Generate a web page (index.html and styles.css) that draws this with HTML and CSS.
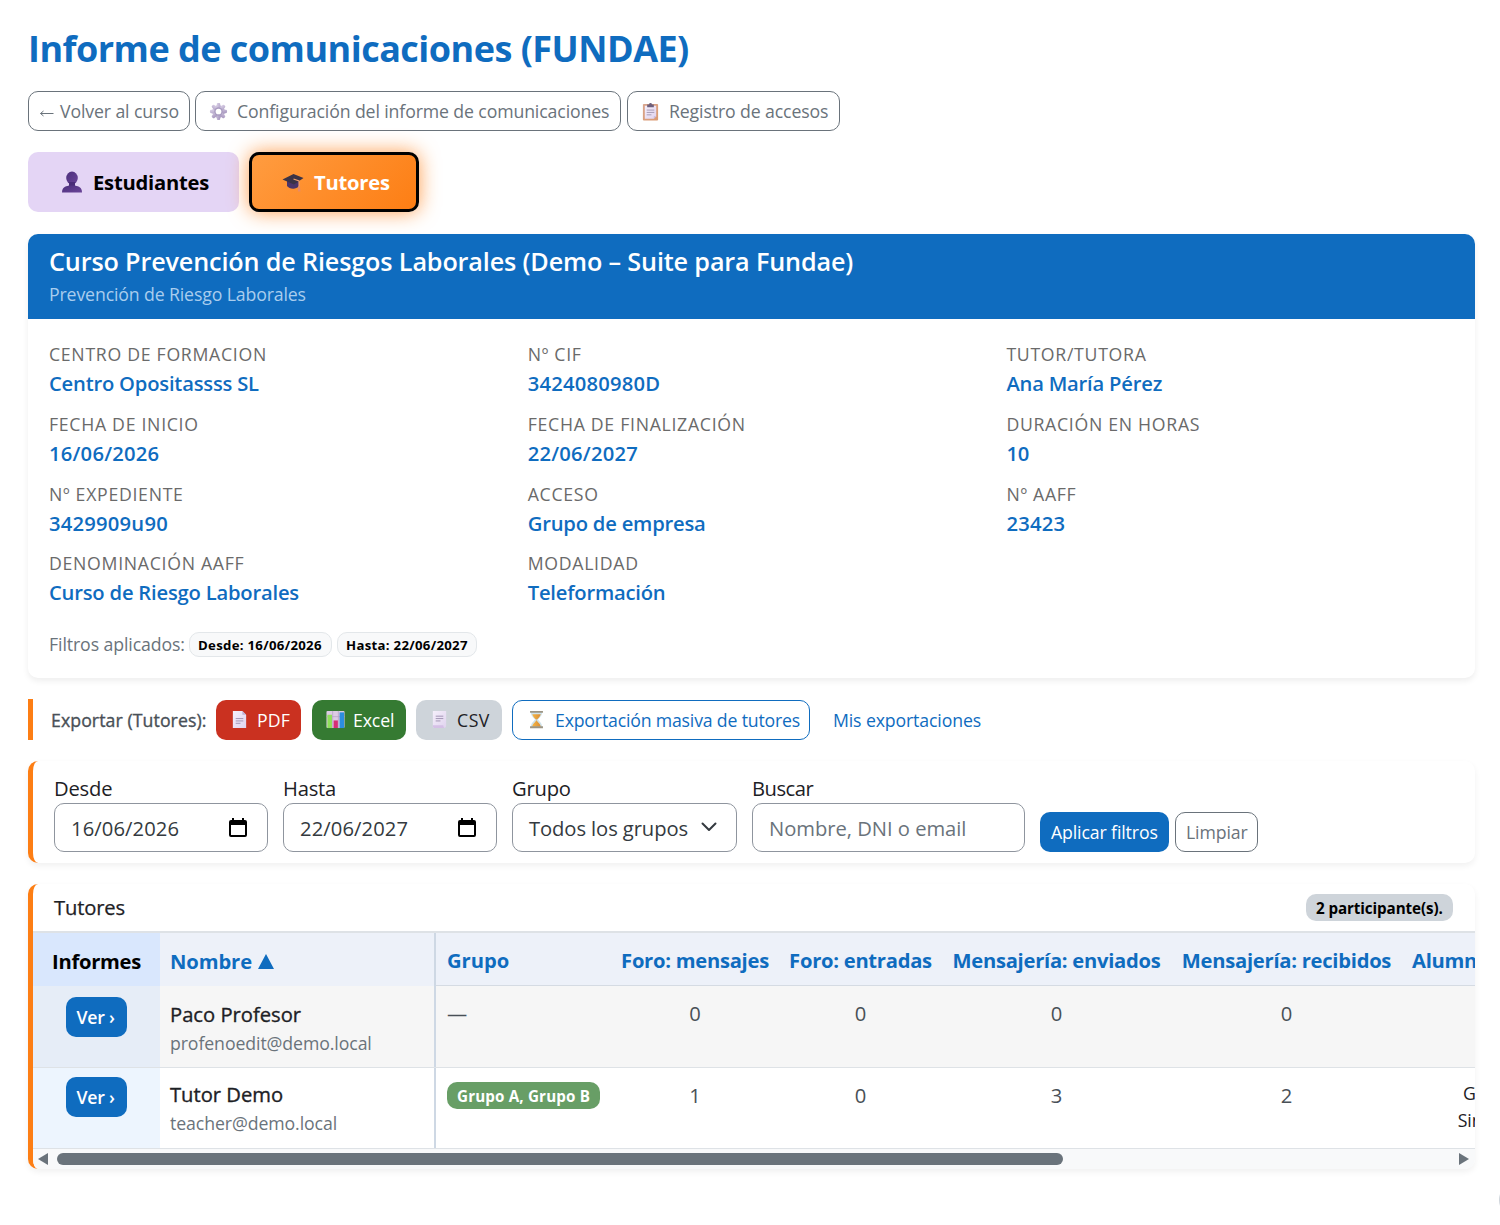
FILE: index.html
```html
<!DOCTYPE html>
<html lang="es">
<head>
<meta charset="utf-8">
<title>Informe de comunicaciones (FUNDAE)</title>
<link rel="stylesheet" href="styles.css">
</head>
<body>
<svg class="sprite" width="0" height="0" aria-hidden="true">
  <defs>
    <linearGradient id="lilac" x1="0" y1="0" x2="1" y2="1"><stop offset="0" stop-color="#d9cfe6"/><stop offset="1" stop-color="#a595bd"/></linearGradient>
    <linearGradient id="violet" x1="0" y1="0" x2="1" y2="1"><stop offset="0" stop-color="#4b2f7c"/><stop offset="1" stop-color="#6b4599"/></linearGradient>
    <linearGradient id="paper" x1="0" y1="0" x2="1" y2="1"><stop offset="0" stop-color="#f5effb"/><stop offset="1" stop-color="#e0d3ee"/></linearGradient>
    <linearGradient id="board" x1="0" y1="0" x2="1" y2="1"><stop offset="0" stop-color="#d8a58e"/><stop offset="1" stop-color="#dc9a70"/></linearGradient>
    <linearGradient id="sand" x1="0" y1="0" x2="1" y2="0"><stop offset="0" stop-color="#f4b545"/><stop offset="1" stop-color="#d98c35"/></linearGradient>
  </defs>
</svg>
<main class="page">
  <h1 class="page-title">Informe de comunicaciones (FUNDAE)</h1>

  <nav class="toolbar">
    <a class="btn btn-outline btn-back"><svg class="arrow" viewBox="0 0 15 12"><path d="M1.500 6.500H14.500M4.500 4L1.500 6.500L4.500 9" fill="none" stroke="currentColor" stroke-width="1"/></svg>Volver al curso</a>
    <a class="btn btn-outline btn-config">
      <svg class="emoji" viewBox="0 0 20 20"><g fill="url(#lilac)"><circle cx="10" cy="10" r="6.8"/><g id="teeth"><rect x="8.2" y="1" width="3.6" height="18" rx="1.2"/><rect x="1" y="8.2" width="18" height="3.6" rx="1.2"/></g><use href="#teeth" transform="rotate(45 10 10)"/></g><circle cx="10" cy="10" r="4.4" fill="#a99bc0"/><circle cx="10" cy="10" r="3" fill="#fff"/></svg>
      Configuración del informe de comunicaciones</a>
    <a class="btn btn-outline btn-log">
      <svg class="emoji" viewBox="0 0 20 20"><rect x="2" y="2" width="16" height="17.5" rx="1" fill="url(#board)"/><path d="M4 4H16V15L13.5 17.5H4Z" fill="url(#paper)"/><path d="M16 15h-2.5v2.5z" fill="#c9b6d8"/><path d="M6 8.5h8M6 11h8M6 13.5h5" stroke="#a69ab5" stroke-width="1"/><path d="M6.5 2.5h2a1.5 1.5 0 0 1 3 0h2V5.5h-7z" fill="#6d5f7c"/></svg>
      Registro de accesos</a>
  </nav>

  <div class="tabs">
    <a class="tab tab-students"><svg class="tab-icon" viewBox="0 0 22 22"><ellipse cx="11" cy="7" rx="5.8" ry="6.500" fill="url(#violet)"/><path d="M8 11h6v5H8z" fill="#4a2d78"/><path d="M1 21.500c0-5 3-6 7-7h6c4 1 7 2 7 7z" fill="url(#violet)"/></svg>Estudiantes</a>
    <a class="tab tab-tutors"><svg class="tab-icon" viewBox="0 0 22 22"><path d="M5 9v6c2 3 9 4 12 0V9z" fill="#4c3569"/><path d="M0.500 8.500L11.500 3L21.500 7L12 13.500z" fill="#3b3346"/><path d="M11.500 8l5.500 2v7" fill="none" stroke="#f0a070" stroke-width="1.100"/><path d="M16.200 15.500h1.800l.4 5h-2.500z" fill="#e98a66"/></svg>Tutores</a>
  </div>

  <section class="course">
    <header class="course-head">
      <h2 class="course-title">Curso Prevención de Riesgos Laborales (Demo – Suite para Fundae)</h2>
      <p class="course-sub">Prevención de Riesgo Laborales</p>
    </header>
    <div class="course-body">
      <dl class="facts">
        <div class="fact"><dt>CENTRO DE FORMACION</dt><dd>Centro Opositassss SL</dd></div>
        <div class="fact"><dt>Nº CIF</dt><dd class="numeric">3424080980D</dd></div>
        <div class="fact"><dt>TUTOR/TUTORA</dt><dd>Ana María Pérez</dd></div>
        <div class="fact"><dt>FECHA DE INICIO</dt><dd class="numeric">16/06/2026</dd></div>
        <div class="fact"><dt>FECHA DE FINALIZACIÓN</dt><dd class="numeric">22/06/2027</dd></div>
        <div class="fact"><dt>DURACIÓN EN HORAS</dt><dd>10</dd></div>
        <div class="fact"><dt>Nº EXPEDIENTE</dt><dd class="numeric">3429909u90</dd></div>
        <div class="fact"><dt>ACCESO</dt><dd>Grupo de empresa</dd></div>
        <div class="fact"><dt>Nº AAFF</dt><dd class="numeric">23423</dd></div>
        <div class="fact"><dt>DENOMINACIÓN AAFF</dt><dd>Curso de Riesgo Laborales</dd></div>
        <div class="fact"><dt>MODALIDAD</dt><dd>Teleformación</dd></div>
      </dl>
      <div class="applied"><span class="applied-label">Filtros aplicados:</span><span class="chip chip-from">Desde: 16/06/2026</span><span class="chip chip-to">Hasta: 22/06/2027</span></div>
    </div>
  </section>

  <section class="export">
    <span class="export-label">Exportar (Tutores):</span>
    <a class="btn btn-pdf"><svg class="emoji" viewBox="0 0 20 20"><path d="M3 1h10l4 4v14H3z" fill="url(#paper)"/><path d="M13 1v4h4z" fill="#bfaed2"/><path d="M6 9h8M6 11.500h8M6 14h5" stroke="#a092b2" stroke-width="1"/></svg>PDF</a>
    <a class="btn btn-excel"><svg class="emoji" viewBox="0 0 20 20"><rect x=".5" y="1" width="19" height="18" rx="1" fill="#dccbe4"/><path d="M7 1v18M13 1v18M.5 7h19" stroke="#b6a2c5" stroke-width=".8"/><rect x="1.500" y="5" width="4.800" height="14" fill="#8fe05a"/><rect x="8" y="11" width="4.500" height="8" fill="#d62f75"/><rect x="14.300" y="2.500" width="4.700" height="16.500" fill="#2c8ee0"/></svg>Excel</a>
    <a class="btn btn-csv"><svg class="emoji" viewBox="0 0 20 20"><path d="M3 1h14v15c0 2-1 3-3 3H5c-1.500 0-2-1-2-2z" fill="url(#paper)"/><path d="M3 16h11c0 2 1 3 3 3H5c-1.500 0-2-1-2-3z" fill="#d5c0e6"/><path d="M6 6.500h8M6 9h8M6 11.500h5" stroke="#a092b2" stroke-width="1"/></svg>CSV</a>
    <a class="btn btn-bulk"><svg class="emoji" viewBox="0 0 20 20"><path d="M4 2h12c0 4-2.500 5.500-4.500 8c2 2.500 4.500 4 4.500 8H4c0-4 2.500-5.500 4.500-8C6.500 7.500 4 6 4 2z" fill="#cfe3ec"/><path d="M5.500 4.500h9c-.6 2.500-2.500 4-4 5.500h-1c-1.500-1.500-3.400-3-4-5.500zM9.500 11h1c.5 2 3.500 3 4 6.500h-9c.5-3.500 3.500-4.500 4-6.500z" fill="url(#sand)"/><path d="M3.200 1h13.600v2H3.200zM3.200 17.200h13.600v2H3.200z" fill="#9c9584"/></svg>Exportación masiva de tutores</a>
    <a class="export-link">Mis exportaciones</a>
  </section>

  <form class="panel filters">
    <label class="field f-date"><span class="field-label">Desde</span><span class="control numeric">16/06/2026<svg class="cal" viewBox="0 0 18 20"><path d="M3 0h2v2h8V0h2v2h1q2 0 2 2v13q0 2-2 2H2q-2 0-2-2V4q0-2 2-2h1zM2 7v10h14V7z" fill="#000" fill-rule="evenodd"/></svg></span></label>
    <label class="field f-date"><span class="field-label">Hasta</span><span class="control numeric">22/06/2027<svg class="cal" viewBox="0 0 18 20"><path d="M3 0h2v2h8V0h2v2h1q2 0 2 2v13q0 2-2 2H2q-2 0-2-2V4q0-2 2-2h1zM2 7v10h14V7z" fill="#000" fill-rule="evenodd"/></svg></span></label>
    <label class="field f-group"><span class="field-label">Grupo</span><span class="control">Todos los grupos<svg class="chev" viewBox="0 0 16 10"><path d="M1.500 1.500L8 8l6.500-6.500" fill="none" stroke="#343a40" stroke-width="2" stroke-linecap="round" stroke-linejoin="round"/></svg></span></label>
    <label class="field f-search"><span class="field-label search-label">Buscar</span><span class="control placeholder">Nombre, DNI o email</span></label>
    <a class="btn btn-primary btn-apply">Aplicar filtros</a>
    <a class="btn btn-outline btn-clear">Limpiar</a>
  </form>

  <section class="panel results">
    <header class="results-head"><h3 class="results-title">Tutores</h3><span class="count">2 participante(s).</span></header>
    <div class="table">
      <div class="tr thead">
        <div class="td c-report">Informes</div>
        <div class="td c-name">Nombre<svg class="sort" viewBox="0 0 16 15"><path d="M8 0l8 15H0z" fill="#0f6cbf"/></svg></div>
        <div class="td c-group">Grupo</div>
        <div class="td c-fm">Foro: mensajes</div>
        <div class="td c-fe">Foro: entradas</div>
        <div class="td c-ms">Mensajería: enviados</div>
        <div class="td c-mr">Mensajería: recibidos</div>
        <div class="td c-last">Alumnos</div>
      </div>
      <div class="tr odd">
        <div class="td c-report"><a class="btn btn-primary btn-view">Ver ›</a></div>
        <div class="td c-name"><span class="name">Paco Profesor</span><span class="mail">profenoedit@demo.local</span></div>
        <div class="td c-group">—</div>
        <div class="td c-fm">0</div><div class="td c-fe">0</div><div class="td c-ms">0</div><div class="td c-mr">0</div><div class="td c-last"></div>
      </div>
      <div class="tr even">
        <div class="td c-report"><a class="btn btn-primary btn-view">Ver ›</a></div>
        <div class="td c-name"><span class="name">Tutor Demo</span><span class="mail">teacher@demo.local</span></div>
        <div class="td c-group"><span class="group-badge">Grupo A, Grupo B</span></div>
        <div class="td c-fm">1</div><div class="td c-fe">0</div><div class="td c-ms">3</div><div class="td c-mr">2</div>
        <div class="td c-last"><span class="detail">Grupo A</span><span class="detail">Sin grupo</span></div>
      </div>
    </div>
    <div class="scrollbar"><span class="scroll-arrow left"></span><span class="thumb"></span><span class="scroll-arrow right"></span></div>
  </section>
</main>
<div class="fab"></div>
</body>
</html>
```
FILE: styles.css
```css
* { box-sizing: border-box; }
body { margin: 0; width: 1500px; height: 1225px; overflow: hidden; position: relative; background: #fff; color: #1d2125; font: 400 20.2px/30px "Open Sans", "Noto Sans", sans-serif; }
h1, h2, h3, p, dl, dd { margin: 0; font-weight: inherit; font-size: inherit; }
.sprite { position: absolute; }
.page { padding: 0 25px 0 28px; display: flex; flex-direction: column; white-space: nowrap; }

.page-title { margin-top: 24px; height: 50px; line-height: 50px; font-size: 36px; font-weight: 700; letter-spacing: -.52px; color: #0f6cbf; }

.btn { display: flex; align-items: center; height: 40px; padding: 0 10px; border: 1px solid transparent; border-radius: 10px; font-size: 17.7px; line-height: 26px; letter-spacing: -.12px; flex: none; }
.btn-outline { border-color: #6a737b; color: #6a737b; }
.emoji { width: 19px; height: 19px; flex: none; }
.toolbar { display: flex; gap: 6px; margin-top: 17px; }
.btn-back { width: 162px; margin-right: -1px; }
.arrow { width: 15px; height: 12px; margin: 3px 6px 0 0; }
.btn-config { width: 426px; }
.btn-log { width: 213px; }
.toolbar .emoji { margin: 0 9px 0 3px; }

.tabs { display: flex; gap: 10px; margin-top: 21px; }
.tab { display: flex; align-items: center; height: 60px; border-radius: 10px; font-weight: 700; letter-spacing: -.22px; color: #000; }
.tab-icon { width: 22px; height: 22px; margin-right: 10px; flex: none; }
.tab-students { width: 211px; padding-left: 33px; background: #e4d5f5; }
.tab-tutors { width: 170px; padding-left: 30px; color: #fff; border: 3px solid #000; background: linear-gradient(135deg, #ff9c40, #fd7e14); box-shadow: 0 0 20px rgba(253, 126, 20, .75); }

.course { margin-top: 22px; height: 444px; border-radius: 10px; background: #fff; box-shadow: 0 3px 6px rgba(0, 0, 0, .07); }
.course-head { height: 85px; padding: 10.5px 21px 0; background: #0f6cbf; color: #fff; border-radius: 10px 10px 0 0; }
.course-title { font-size: 25.2px; line-height: 33px; font-weight: 600; letter-spacing: -.15px; }
.course-sub { font-size: 17.7px; line-height: 32px; letter-spacing: -.13px; color: #a9cdee; }
.course-body { padding: 21px; }
.facts { display: grid; grid-template-columns: repeat(3, 478.7px); grid-auto-rows: 69.8px; }
.fact dt { font-size: 17.7px; line-height: 28px; letter-spacing: .7px; color: #6a6a6a; }
.fact dd { line-height: 31px; font-weight: 600; letter-spacing: -.2px; color: #0f6cbf; }
.fact dd.numeric { letter-spacing: .22px; }
.applied { display: flex; align-items: center; height: 30px; margin-top: 10px; color: #6a737b; font-size: 17.7px; }
.applied-label { width: 140px; letter-spacing: -.1px; }
.chip { height: 25px; padding: 0 8px; border: 1px solid #e3e7ea; border-radius: 10px; background: #f8f9fa; color: #000; font-size: 13.2px; line-height: 24px; font-weight: 700; letter-spacing: .3px; }
.chip-from { width: 143px; margin-right: 5px; }
.chip-to { width: 140px; }

.export { display: flex; align-items: center; height: 41px; margin-top: 21px; border-left: 5px solid #fd7e14; padding-left: 18px; }
.export-label { width: 165px; font-size: 17.7px; letter-spacing: .08px; -webkit-text-stroke: .35px #495057; color: #495057; }
.export .emoji { margin: 0 8px 0 3px; }
.btn-pdf { width: 85px; margin-right: 11px; background: #ca3120; color: #fff; letter-spacing: .1px; }
.btn-excel { width: 94px; margin-right: 10px; background: #357a32; color: #fff; }
.btn-csv { width: 86px; margin-right: 10px; background: #ced4da; color: #1d2125; letter-spacing: .5px; }
.btn-bulk { width: 298px; margin-right: 23px; border-color: #0f6cbf; color: #0f6cbf; letter-spacing: -.18px; }
.btn-bulk .emoji { margin: 0 9px 0 4px; }
.export-link { font-size: 17.7px; letter-spacing: -.13px; color: #0f6cbf; }

.panel { border-left: 5px solid #fd7e14; border-radius: 10px; background: #fff; box-shadow: 0 3px 6px rgba(0, 0, 0, .06); }
.filters { display: flex; align-items: flex-end; height: 102px; margin-top: 21px; padding: 0 0 11px 21px; }
.field { display: flex; flex-direction: column; }
.field-label { line-height: 30px; letter-spacing: -.2px; }
.search-label { letter-spacing: -.5px; }
.control { display: flex; align-items: center; height: 49px; padding: 0 16px; border: 1px solid #8f959e; border-radius: 10px; color: #343a40; letter-spacing: -.09px; }
.control.numeric { letter-spacing: .1px; }
.control.placeholder { color: #6a737b; letter-spacing: -.03px; }
.f-date { width: 214px; margin-right: 15px; }
.f-group { width: 225px; margin-right: 15px; }
.f-search { width: 273px; margin-right: 15px; }
.cal { width: 18px; height: 20px; margin: 0 4px 0 auto; }
.chev { width: 16px; height: 10px; margin: -1px 3px 0 auto; }
.btn-primary { background: #0f6cbf; color: #fff; }
.btn-apply { width: 129px; margin-right: 6px; }
.btn-clear { width: 83px; }

.results { height: 285px; margin-top: 21px; overflow: hidden; }
.results-head { display: flex; justify-content: space-between; align-items: center; height: 49px; padding: 0 22px 0 21px; border-bottom: 2px solid #dee2e6; }
.results-title { line-height: 28px; margin-top: -1px; letter-spacing: -.15px; -webkit-text-stroke: .25px #1d2125; }
.count { width: 147px; height: 27px; padding-left: 10px; border-radius: 10px; background: #ced4da; color: #000; font-size: 15.2px; line-height: 28px; font-weight: 700; letter-spacing: -.1px; }
.tr { display: flex; height: 81px; width: 1600px; border-bottom: 1px solid #dee2e6; }
.odd { height: 82px; }
.td { flex: none; text-align: center; padding-top: 12px; color: #495057; }
.tr .c-report { background: #edf5fe; }
.odd .td { background: #f6f6f6; }
.odd .c-report { background: #e6edf7; }
.thead { height: 53px; border-bottom: 0; font-weight: 700; letter-spacing: -.27px; }
.thead .td { padding-top: 12px; color: #0f6cbf; background: #edf1f9; border-bottom: 1px solid #d5dbe3; }
.thead .c-report { padding-top: 13px; background: #d9e7fd; color: #000; border-bottom: 0; }
.thead .c-name { display: flex; padding-top: 13px; border-bottom: 0; letter-spacing: -.1px; }
.sort { width: 16px; height: 15px; margin: 8px 0 0 6px; }
.c-report { width: 127px; }
.td.c-name, .td.c-group { text-align: left; }
.c-name { width: 276px; padding-left: 10px; border-right: 2px solid #ced8e4; }
.c-group { width: 175px; padding-left: 11px; }
.thead .c-group { letter-spacing: -.05px; }
.c-fm { width: 168px; }
.c-fe { width: 163px; }
.c-ms { width: 229px; }
.c-mr { width: 231px; }
.c-last { width: 190px; }
.thead .c-last { text-align: left; padding-left: 10px; }
.btn-view { width: 61px; margin: -1px auto 0 32.5px; font-weight: 600; letter-spacing: -.25px; }
.even .btn-view { margin-top: -3px; }
.odd .c-name { padding-top: 13px; }
.even .c-name { padding-top: 11px; }
.name, .mail { display: block; }
.name { color: #1d2125; -webkit-text-stroke: .35px #1d2125; }
.mail { font-size: 17.7px; line-height: 28px; letter-spacing: -.09px; color: #6a737b; }
.group-badge { display: block; width: 153px; height: 27px; margin-top: 2px; padding-left: 10px; border-radius: 10px; background: #689e66; color: #fff; font-size: 15.2px; line-height: 28px; font-weight: 700; letter-spacing: .15px; }
.detail { display: block; font-size: 17.7px; line-height: 27px; color: #1d2125; }
.scrollbar { display: flex; align-items: center; height: 20px; background: #f8f9fa; padding: 0 6px 0 5px; }
.thumb { width: 1006px; height: 12px; border-radius: 6px; background: #6a737b; margin: 0 auto 0 9px; }
.scroll-arrow { border: 6px solid transparent; }
.left { border-right: 10px solid #6a737b; border-left: 0; }
.right { border-left: 10px solid #6a737b; border-right: 0; }
.fab { position: absolute; left: 1499px; top: 1182px; width: 36px; height: 36px; border-radius: 50%; background: #ced4da; }
```
